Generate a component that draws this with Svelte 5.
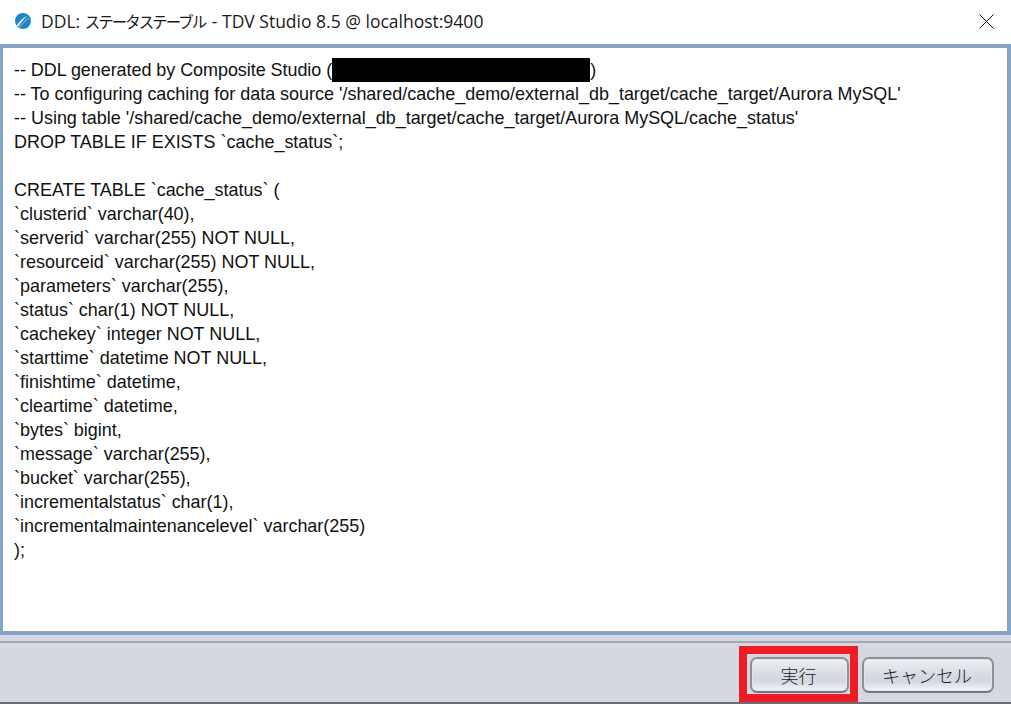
<script lang="ts">
  const before = `-- To configuring caching for data source '/shared/cache_demo/external_db_target/cache_target/Aurora MySQL'
-- Using table '/shared/cache_demo/external_db_target/cache_target/Aurora MySQL/cache_status'
DROP TABLE IF EXISTS \`cache_status\`;

CREATE TABLE \`cache_status\` (
\`clusterid\` varchar(40),
\`serverid\` varchar(255) NOT NULL,
\`resourceid\` varchar(255) NOT NULL,
\`parameters\` varchar(255),
\`status\` char(1) NOT NULL,
\`cachekey\` integer NOT NULL,
\`starttime\` datetime NOT NULL,
\`finishtime\` datetime,
\`cleartime\` datetime,
\`bytes\` bigint,
\`message\` varchar(255),
\`bucket\` varchar(255),
\`incrementalstatus\` char(1),
\`incrementalmaintenancelevel\` varchar(255)
);`;
</script>

<div class="dialog">
  <header class="titlebar">
    <svg class="logo" viewBox="0 0 16 16" aria-hidden="true">
      <circle cx="8" cy="8" r="8" fill="#1a86c8" />
      <path d="M1.6 12.6C4.6 8.2 8 5 12.4 2.6C9 6 6.2 9.2 3.4 13.6Z" fill="#e6f2fa" />
      <path d="M4.6 14.4C7.4 10.6 10 7.8 14 5.2" stroke="#bcdcf0" stroke-width="0.7" fill="none" />
    </svg>
    <span class="title">DDL: <span class="ja">ステータステーブル</span> - TDV Studio 8.5 @ localhost:9400</span>
    <button type="button" class="close" aria-label="閉じる">
      <svg viewBox="0 0 15 15" width="15" height="15">
        <path d="M0.5 0.5L14.5 14.5M14.5 0.5L0.5 14.5" stroke="#111" stroke-width="1" fill="none" />
      </svg>
    </button>
  </header>

  <div class="editor">
    <div class="code">
      <div class="firstline">-- DDL generated by Composite Studio (<span class="redact"></span>)</div>
      <pre>{before}</pre>
    </div>
  </div>

  <footer class="actions">
    <div class="highlight">
      <button type="button" class="btn run">実行</button>
    </div>
    <button type="button" class="btn cancel">キャンセル</button>
  </footer>
</div>

<style>
  :global(body) {
    background: #fff;
  }

  .dialog {
    width: 1011px;
    height: 704px;
    display: flex;
    flex-direction: column;
    overflow: hidden;
    background: #d5d8e1;
  }

  .titlebar {
    height: 44px;
    flex: none;
    display: flex;
    align-items: center;
    gap: 10px;
    padding: 0 17px 2px 15px;
    box-sizing: border-box;
    background: #fff;
  }

  .logo {
    width: 16px;
    height: 16px;
    flex: none;
  }

  .title {
    flex: 1;
    font: 17.5px "Open Sans", "Noto Sans CJK JP", sans-serif;
    color: #1a1a1a;
    white-space: nowrap;
  }

  .ja {
    font-size: 15.5px;
    letter-spacing: -2px;
    margin-right: 2px;
    font-family: "Noto Sans CJK JP", sans-serif;
  }

  .close {
    appearance: none;
    border: none;
    background: none;
    padding: 0;
    width: 15px;
    height: 15px;
    display: flex;
  }

  .editor {
    height: 591px;
    flex: none;
    box-sizing: border-box;
    border: solid #7ea6d2;
    border-width: 3px 2px 2px;
    background: #fff;
    box-shadow: inset 1px 1px 0 #9a9ea8, inset -2px -2px 0 #9a9ea8;
  }

  .code {
    padding: 11px 0 0 12px;
    font: 17.97px/24px "Liberation Sans", Arial, sans-serif;
    color: #111;
  }

  .firstline {
    height: 24px;
    white-space: nowrap;
    letter-spacing: -0.04px;
  }

  .redact {
    display: inline-block;
    width: 258px;
    height: 24px;
    background: #000;
    vertical-align: top;
  }

  pre {
    margin: 0;
    font: inherit;
    white-space: pre;
  }

  .actions {
    flex: 1;
    box-sizing: border-box;
    margin-top: 6px;
    border-top: 2px solid #a3a6b0;
    border-bottom: 2px solid #6e6e72;
    display: flex;
    justify-content: flex-end;
    align-items: flex-start;
    gap: 4px;
    padding: 3px 17px 0 0;
    background: #d5d8e1;
  }

  .highlight {
    box-sizing: border-box;
    border: 8px solid #ee1c25;
    padding: 3px 1px 1px 3px;
    height: 56px;
    display: flex;
  }

  .btn {
    appearance: none;
    height: 36px;
    box-sizing: border-box;
    border: 2px solid #8e9094;
    border-bottom-color: #77797e;
    border-radius: 7px;
    background: linear-gradient(#eef0f4 0%, #d5d8e1 55%, #d5d8e1 70%, #f4f6fb 100%);
    box-shadow: inset 0 0 0 1px #e4e6ec;
    font: 300 18px "Noto Sans CJK JP", sans-serif;
    color: #222;
    padding: 0 2px 0 0;
  }

  .run {
    width: 99px;
  }

  .cancel {
    width: 132px;
    margin-top: 11px;
  }
</style>
